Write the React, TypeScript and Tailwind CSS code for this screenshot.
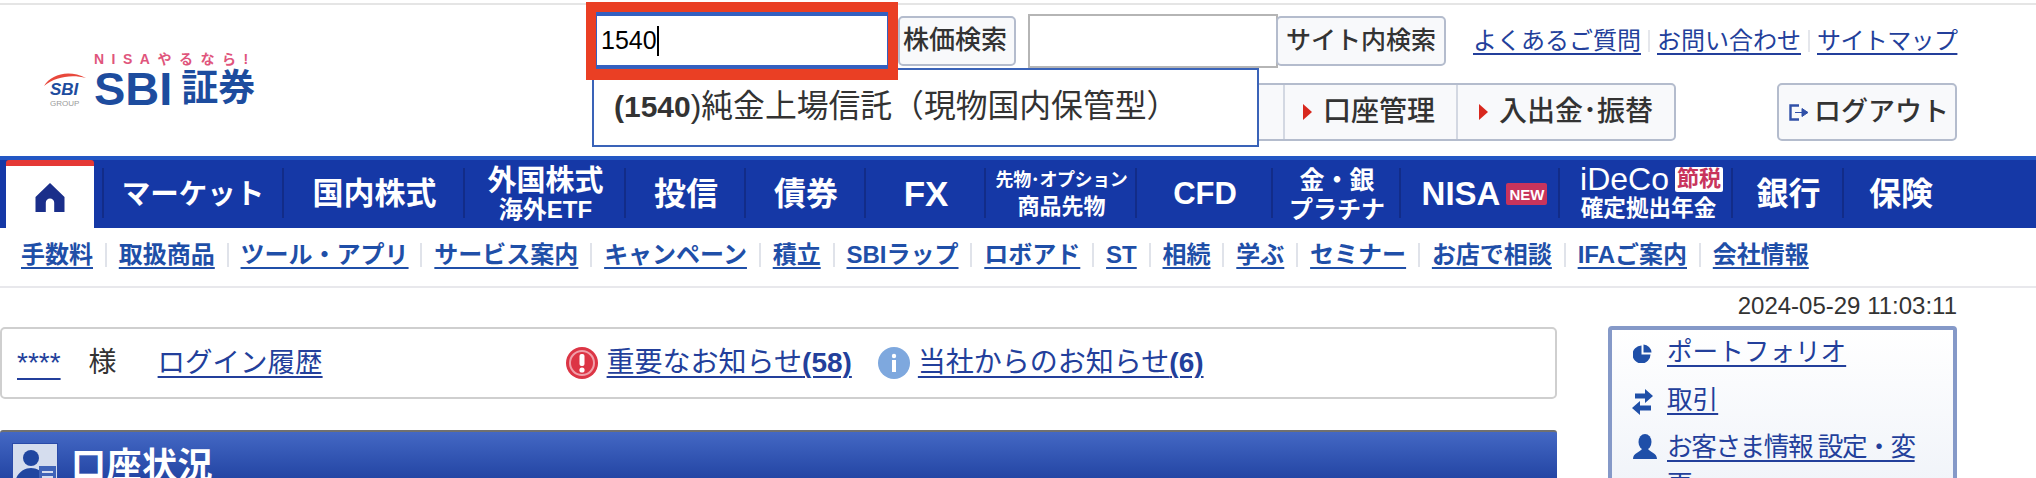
import React from 'react';

const FONT = '"Liberation Sans", "Noto Sans CJK JP", sans-serif';

const subLinks = [
  '手数料', '取扱商品', 'ツール・アプリ', 'サービス案内', 'キャンペーン', '積立', 'SBIラップ',
  'ロボアド', 'ST', '相続', '学ぶ', 'セミナー', 'お店で相談', 'IFAご案内', '会社情報',
];

function Logo() {
  return (
    <div className="flex items-start">
      <svg width="43" height="38" viewBox="0 0 43 38" className="mt-[19px] shrink-0">
        <path d="M1 15 C8 3 26 -2 43 7 C28 3 12 6 1 15 Z" fill="#e8483c" />
        <text x="7" y="24" fontSize="17" fontWeight="700" fontStyle="italic" fill="#1d4c9e" fontFamily="Liberation Sans">SBI</text>
        <text x="7" y="35" fontSize="8" fill="#9a9a9a" fontFamily="Liberation Sans">GROUP</text>
      </svg>
      <div className="ml-[8px] flex flex-col">
        <div className="h-[18px] text-[14px] leading-[14px] font-bold tracking-[7.5px] whitespace-nowrap text-[#e0557c]">NISAやるなら!</div>
        <div className="flex h-[38px] items-center font-bold whitespace-nowrap text-[#1d4c9e]">
          <span className="text-[47px] leading-[38px]">SBI</span>
          <span className="ml-[9px] text-[37px] leading-[38px]">証券</span>
        </div>
      </div>
    </div>
  );
}

function Triangle() {
  return <span className="mr-[11px] h-0 w-0 border-y-[8px] border-l-[9px] border-y-transparent border-l-[#d8281e]" />;
}

function NavCell({ w, children, sep = true }: { w: number; children: React.ReactNode; sep?: boolean }) {
  return (
    <div className="relative flex h-full shrink-0 flex-col items-center justify-center font-bold whitespace-nowrap text-white" style={{ width: w }}>
      {children}
      {sep && <span className="absolute top-[8px] right-0 h-[50px] w-[2px] bg-[#122c88]" />}
    </div>
  );
}

export default function App() {
  return (
    <div className="relative h-[478px] w-[2036px] overflow-hidden bg-white text-[#333]" style={{ fontFamily: FONT }}>
      <div className="mt-[3px] h-[2px] bg-[#e5e5e5]" />

      {/* ヘッダー */}
      <header className="flex h-[151px]">
        <div className="w-[596px] shrink-0 pt-[47px] pl-[43px]">
          <Logo />
        </div>
        <div className="flex flex-col pt-[7px]">
          <div className="flex h-[57px] items-center">
            <div className="flex h-[57px] w-[292px] items-center border-x border-y-[4px] border-x-[#3460c0] border-y-[#3460c0] bg-white pl-[4px] text-[25px] text-black">
              1540<span className="h-[30px] w-[2px] bg-black" />
            </div>
            <button className="ml-[10px] h-[50px] w-[118px] rounded-[5px] border-2 border-[#b4bccd] bg-[#f8f9fb] pr-[4px] text-[26px] font-medium whitespace-nowrap text-[#333]">株価検索</button>
            <div className="ml-[12px] h-[54px] w-[250px] border-2 border-[#b5b5b5] bg-white" />
            <button className="-ml-[2px] h-[50px] w-[170px] rounded-[5px] border-2 border-[#b4bccd] bg-[#f8f9fb] text-[25px] font-medium whitespace-nowrap text-[#333]">サイト内検索</button>
            <div className="ml-[27px] flex items-center text-[24px] whitespace-nowrap text-[#233f9b]">
              <a className="underline decoration-2 underline-offset-[4px]">よくあるご質問</a>
              <span className="mx-[7px] h-[22px] w-[2px] bg-[#e5e7ec]" />
              <a className="underline decoration-2 underline-offset-[4px]">お問い合わせ</a>
              <span className="mx-[7px] h-[22px] w-[2px] bg-[#e5e7ec]" />
              <a className="tracking-[-0.6px] underline decoration-2 underline-offset-[4px]">サイトマップ</a>
            </div>
          </div>
          <div className="mt-[14px] flex h-[58px]">
            <div className="ml-[504px] flex h-full w-[576px] rounded-[5px] border-2 border-[#b4bccd] bg-[#f8f9fb] text-[28px] font-medium whitespace-nowrap text-[#333]">
              <div className="w-[183px] border-r-2 border-[#d3d8e2]" />
              <div className="flex w-[173px] items-center border-r-2 border-[#d3d8e2] pl-[18px]"><Triangle />口座管理</div>
              <div className="flex flex-1 items-center pl-[21px]"><Triangle />入出金･振替</div>
            </div>
            <button className="ml-[101px] flex h-full w-[180px] items-center rounded-[5px] border-2 border-[#b4bccd] bg-[#f8f9fb] pl-[9px] text-[27px] font-medium whitespace-nowrap text-[#333]">
              <svg width="21" height="17" viewBox="0 0 21 17" className="mr-[5px] shrink-0" fill="none">
                <path d="M11 1.5H2.5V15.5H11" stroke="#3050a8" strokeWidth="2.4" />
                <path d="M7 8.5H14V4.5L20 8.5L14 12.5V8.5" fill="#3050a8" stroke="#3050a8" />
              </svg>
              ログアウト
            </button>
          </div>
        </div>
      </header>

      {/* メインナビ */}
      <nav className="flex h-[72px] border-t-[4px] border-[#2357c4] bg-[#1538a6]">
        <div className="flex w-[102px] shrink-0 justify-start">
          <div className="relative ml-[6px] flex h-full w-[88px] items-center justify-center rounded-t-[3px] border-t-[6px] border-[#e53935] bg-white">
            <svg width="30" height="29" viewBox="0 0 31 31"><path d="M15.5 0L31 15V31H20V21A4.5 4.5 0 0 0 11 21V31H0V15Z" fill="#1a2e8a" /></svg>
            <span className="absolute top-[2px] left-[96px] h-[50px] w-[2px] bg-[#122c88]" />
          </div>
        </div>
        <NavCell w={182}><span className="text-[28.5px]">マーケット</span></NavCell>
        <NavCell w={181}><span className="text-[31px]">国内株式</span></NavCell>
        <NavCell w={161}>
          <span className="text-[29px] leading-[32px]">外国株式</span>
          <span className="text-[24px] leading-[26px]">海外ETF</span>
        </NavCell>
        <NavCell w={120}><span className="text-[32px]">投信</span></NavCell>
        <NavCell w={120}><span className="text-[32px]">債券</span></NavCell>
        <NavCell w={120}><span className="text-[35px]">FX</span></NavCell>
        <NavCell w={151}>
          <span className="text-[18px] leading-[26px] tracking-[-0.4px]">先物･オプション</span>
          <span className="text-[22px] leading-[28px]">商品先物</span>
        </NavCell>
        <NavCell w={136}><span className="text-[31px]">CFD</span></NavCell>
        <NavCell w={128}>
          <span className="text-[25px] leading-[31px]">金・銀</span>
          <span className="text-[24px] leading-[28px]">プラチナ</span>
        </NavCell>
        <NavCell w={159}>
          <div className="ml-[8px] flex items-center">
            <span className="text-[33px]">NISA</span>
            <span className="ml-[6px] flex h-[22px] w-[41px] items-center justify-center rounded-[2px] bg-[#c8345c] text-[15px] leading-none">NEW</span>
          </div>
        </NavCell>
        <NavCell w={173}>
          <div className="ml-[10px] flex h-[30px] items-center">
            <span className="text-[32px] font-normal">iDeCo</span>
            <span className="ml-[6px] flex h-[25px] w-[48px] items-center justify-center rounded-[2px] bg-white text-[22px] leading-none text-[#c8345c]">節税</span>
          </div>
          <span className="ml-[4px] text-[22.6px] leading-[30px]">確定拠出年金</span>
        </NavCell>
        <NavCell w={111}><span className="text-[32px]">銀行</span></NavCell>
        <NavCell w={114} sep={false}><span className="text-[32px]">保険</span></NavCell>
      </nav>

      {/* サブナビ */}
      <div className="flex h-[60px] items-center border-b-2 border-[#e8e8ec] pb-[4px] pl-[21px] text-[24px] font-bold whitespace-nowrap text-[#1f4fa8]">
        {subLinks.map((label, i) => (
          <React.Fragment key={label}>
            {i > 0 && <span className="mx-[11.9px] h-[24px] w-[2px] bg-[#e0e3ea]" />}
            <a className="underline decoration-2 underline-offset-[4px]">{label}</a>
          </React.Fragment>
        ))}
      </div>

      <div className="flex h-[38px] justify-end pt-[5px] pr-[79px] text-[24px] leading-[26px] text-[#333]">2024-05-29 11:03:11</div>

      <div className="flex">
        <div className="w-[1557px] shrink-0 pt-[1px]">
          <div className="flex h-[72px] items-center rounded-[5px] border-2 border-[#cfcfcf] pl-[15px] text-[28px] whitespace-nowrap">
            <a className="text-[#233f9b] underline decoration-2 underline-offset-[6px]">****</a>
            <span className="ml-[28px] text-[#333]">様</span>
            <a className="ml-[41px] text-[27.5px] text-[#233f9b] underline decoration-2 underline-offset-[4px]">ログイン履歴</a>
            <svg width="32" height="32" viewBox="0 0 32 32" className="ml-[243px] shrink-0">
              <circle cx="16" cy="16" r="16" fill="#dc3545" />
              <circle cx="16" cy="16" r="12" fill="none" stroke="#f0a0aa" strokeWidth="2" />
              <rect x="13.5" y="7" width="5" height="12" rx="2" fill="#fff" />
              <circle cx="16" cy="23" r="2.6" fill="#fff" />
            </svg>
            <a className="ml-[9px] text-[#233f9b] underline decoration-2 underline-offset-[4px]">重要なお知らせ<b>(58)</b></a>
            <svg width="32" height="32" viewBox="0 0 32 32" className="ml-[26px] shrink-0">
              <circle cx="16" cy="16" r="16" fill="#7ea8de" />
              <circle cx="16" cy="9" r="2.2" fill="#fff" />
              <rect x="14" y="13" width="4" height="12" fill="#fff" />
            </svg>
            <a className="ml-[8px] text-[#233f9b] underline decoration-2 underline-offset-[4px]">当社からのお知らせ<b>(6)</b></a>
          </div>
          <div className="mt-[31px] flex h-[60px] rounded-t-[3px] border-t-2 border-[#707070] bg-gradient-to-b from-[#4468c4] to-[#1c3c9c]">
            <div className="relative mt-[11px] ml-[12px] h-[46px] w-[46px] shrink-0 overflow-hidden border border-[#2a4aa8] bg-[#d5ddee]">
              <svg width="46" height="46" viewBox="0 0 46 46">
                <circle cx="18" cy="14" r="8" fill="#2046a0" />
                <path d="M2 38C4 28 12 24 18 24C24 24 32 28 34 38V46H2Z" fill="#2046a0" />
                <rect x="26" y="22" width="17" height="22" fill="#3f63b8" />
                <path d="M29 28H40M29 33H40M29 38H40" stroke="#d5ddee" strokeWidth="2" />
              </svg>
            </div>
            <h2 className="mt-[13px] ml-[13px] text-[35px] leading-[42px] font-bold tracking-[0.5px] text-white">口座状況</h2>
          </div>
        </div>

        <aside className="ml-[51px] h-[200px] w-[349px] shrink-0 rounded-t-[4px] border-4 border-[#8599c8] bg-gradient-to-b from-white to-[#edf1f8] pt-[3px] pl-[21px]">
          <ul className="flex flex-col gap-[9.5px] text-[25.6px] leading-[38px] text-[#233f9b]">
            <li className="flex">
              <svg width="19" height="19" viewBox="0 0 19 19" className="mt-[11px] shrink-0">
                <path d="M8.5 1.5V10.5H17.5A9 9 0 1 1 8.5 1.5Z" fill="#1f4fa8" />
                <path d="M10.5 0.5A8.5 8.5 0 0 1 18.5 8.5H10.5Z" fill="#1f4fa8" />
              </svg>
              <a className="ml-[15px] underline decoration-2 underline-offset-[4px]">ポートフォリオ</a>
            </li>
            <li className="flex">
              <svg width="22" height="28" viewBox="0 0 22 28" className="mt-[7px] -ml-[1px] shrink-0">
                <path d="M21 8L13 1V5.5H3V10.5H13V15Z" fill="#1f4fa8" />
                <path d="M0 20L8 13V17.5H19V22.5H8V27Z" fill="#1f4fa8" />
              </svg>
              <a className="ml-[13px] underline decoration-2 underline-offset-[4px]">取引</a>
            </li>
            <li className="flex">
              <svg width="24" height="25" viewBox="0 0 24 25" className="mt-[6px] shrink-0">
                <ellipse cx="12" cy="8" rx="6.5" ry="8" fill="#1f4fa8" />
                <path d="M0 25C0 19 7 18 9 15H15C17 18 24 19 24 25Z" fill="#1f4fa8" />
              </svg>
              <a className="ml-[10px] w-[256px] tracking-[-1.4px] underline decoration-2 underline-offset-[4px]">お客さま情報 設定・変更</a>
            </li>
          </ul>
        </aside>
      </div>

      {/* サジェスト */}
      <div className="absolute top-[68px] left-[592px] z-10 h-[79px] w-[667px] border-2 border-[#3a63b8] bg-white pt-[15px] pl-[20px] text-[31.8px] leading-[42px] whitespace-nowrap text-[#333]">
        <b className="text-[30px]">(1540</b>)純金上場信託（現物国内保管型）
      </div>

      {/* 注釈の赤枠 */}
      <div className="absolute top-[2px] left-[586px] z-20 h-[78px] w-[312px] border-x-[10px] border-t-[10px] border-b-[11px] border-[#ea3f24]" />
    </div>
  );
}
